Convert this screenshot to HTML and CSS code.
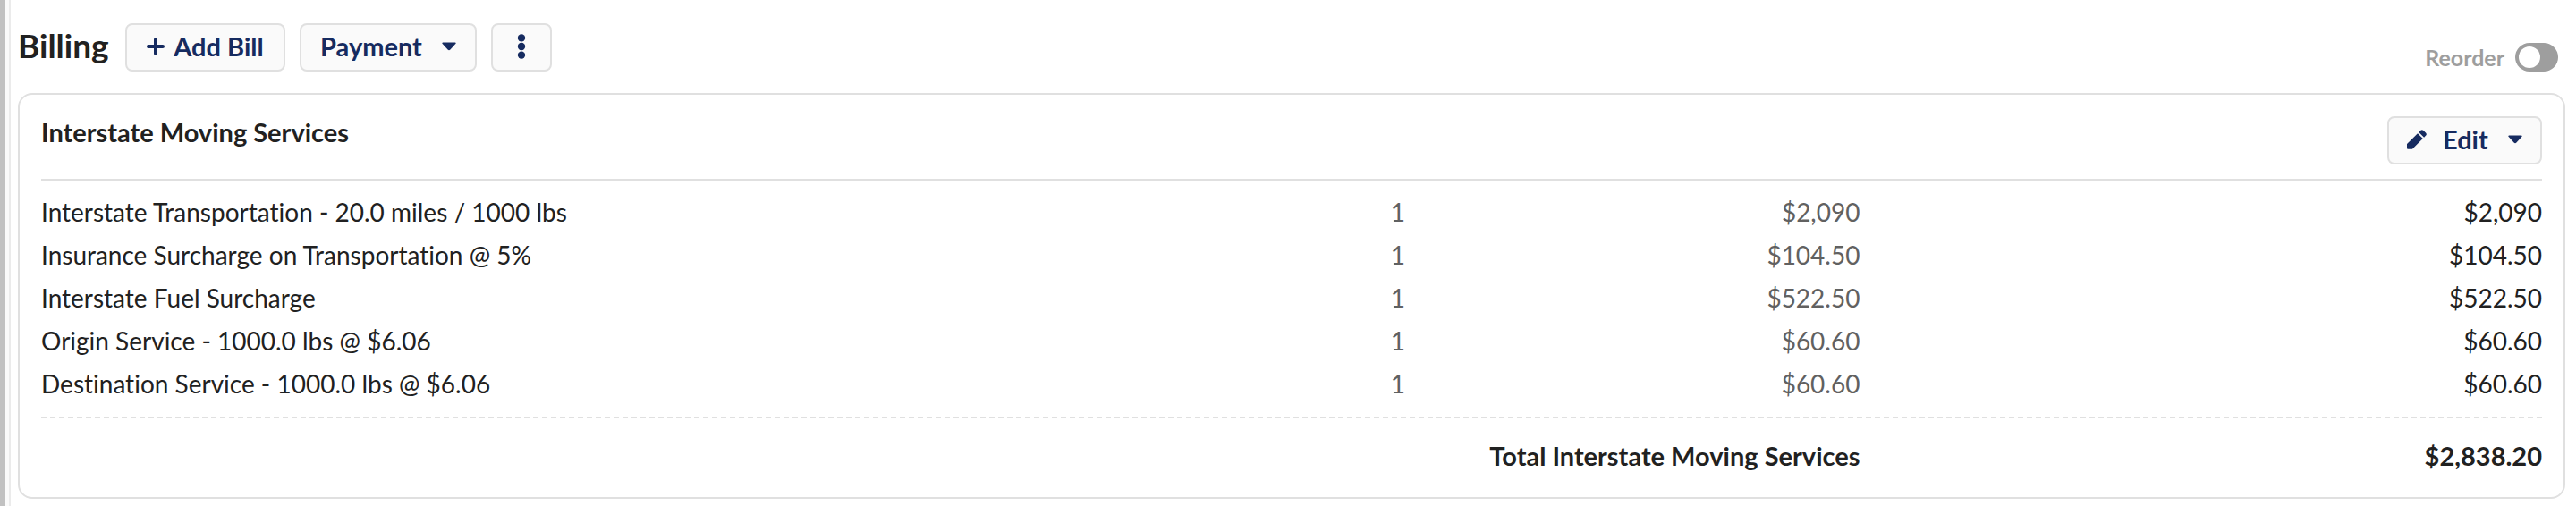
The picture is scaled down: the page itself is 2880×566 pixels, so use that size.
FILE: index.html
```html
<!DOCTYPE html>
<html lang="en">
<head>
<meta charset="utf-8">
<meta name="viewport" content="width=device-width, initial-scale=1">
<title>Billing</title>
<link rel="stylesheet" href="styles.css">
</head>
<body>
<div class="shell">
  <div class="scroll-edge"></div>
  <main class="billing">
    <header class="toolbar">
      <h1 class="page-title">Billing</h1>
      <button class="btn btn-add" type="button">
        <svg class="icon-plus" viewBox="0 0 20 20" aria-hidden="true"><path d="M10 2v16M2 10h16"/></svg>
        <span>Add Bill</span>
      </button>
      <button class="btn btn-payment" type="button">
        <span>Payment</span>
        <svg class="icon-caret" viewBox="0 0 16 10" aria-hidden="true"><path d="M1.200.5h13.600q1.600 0 .5 1.400L9.400 8.600q-1.400 1.400-2.800 0L.7 1.900Q-.4.5 1.200.5z"/></svg>
      </button>
      <button class="btn btn-more" type="button" aria-label="More actions">
        <svg class="icon-dots" viewBox="0 0 10 28" aria-hidden="true"><circle cx="5" cy="4.400" r="4.200"/><circle cx="5" cy="14" r="4.200"/><circle cx="5" cy="23.600" r="4.200"/></svg>
      </button>
      <label class="reorder">
        <span>Reorder</span>
        <input class="switch" type="checkbox" role="switch">
      </label>
    </header>
    <section class="card">
      <div class="card-head">
        <h2 class="card-title">Interstate Moving Services</h2>
        <button class="btn btn-edit" type="button">
          <svg class="icon-pencil" viewBox="0 0 22 22" aria-hidden="true"><path d="M0 16 12 4.200l5.800 5.800L6 21.800H1q-1 0-1-1zM13.300 2.900 15.400.8q1.400-1.200 2.800 0l3 3q1.200 1.400 0 2.800l-2.100 2.100z"/></svg>
          <span>Edit</span>
          <svg class="icon-caret" viewBox="0 0 16 10" aria-hidden="true"><path d="M1.200.5h13.600q1.600 0 .5 1.400L9.400 8.600q-1.400 1.400-2.800 0L.7 1.900Q-.4.5 1.200.5z"/></svg>
        </button>
      </div>
      <table class="charges">
        <tbody>
          <tr><td>Interstate Transportation - 20.0 miles / 1000 lbs</td><td class="muted">1</td><td class="muted">$2,090</td><td class="amount">$2,090</td></tr>
          <tr><td>Insurance Surcharge on Transportation @ 5%</td><td class="muted">1</td><td class="muted">$104.50</td><td class="amount">$104.50</td></tr>
          <tr><td>Interstate Fuel Surcharge</td><td class="muted">1</td><td class="muted">$522.50</td><td class="amount">$522.50</td></tr>
          <tr><td>Origin Service - 1000.0 lbs @ $6.06</td><td class="muted">1</td><td class="muted">$60.60</td><td class="amount">$60.60</td></tr>
          <tr><td>Destination Service - 1000.0 lbs @ $6.06</td><td class="muted">1</td><td class="muted">$60.60</td><td class="amount">$60.60</td></tr>
        </tbody>
        <tfoot>
          <tr><th class="total-label" colspan="3" scope="row">Total Interstate Moving Services</th><td class="amount">$2,838.20</td></tr>
        </tfoot>
      </table>
    </section>
  </main>
</div>
</body>
</html>
```

FILE: styles.css
```css
* {
  box-sizing: border-box;
}

body {
  margin: 0;
  background: #fff;
  color: #212121;
  font-family: Lato, "Liberation Sans", sans-serif;
  font-size: 28px;
  font-variant-ligatures: none;
  line-height: 48px;
}

.shell {
  display: flex;
  min-height: 100vh;
}

.scroll-edge {
  flex: none;
  width: 12px;
  background: #fafafa;
  border-left: 6px solid #c1c1c1;
  border-right: 2px solid #ebebeb;
}

.billing {
  flex: 1;
  min-width: 0;
  padding: 26px 12px 8px 8px;
}

.toolbar {
  display: flex;
  align-items: center;
  gap: 16px;
  margin-bottom: 24px;
}

.page-title {
  min-width: 104px;
  margin: 0;
  padding-bottom: 4px;
  font-size: 37px;
  font-weight: 700;
  line-height: 48px;
}

.btn {
  display: flex;
  align-items: center;
  justify-content: center;
  height: 54px;
  padding: 0 20px 2px;
  border: 2px solid #e0e0e0;
  border-radius: 8px;
  background: #fafafa;
  color: #162b60;
  font: inherit;
  font-size: 29px;
  font-weight: 700;
  cursor: pointer;
}

.btn svg {
  flex: none;
  fill: currentColor;
}

.btn-add {
  gap: 10px;
  min-width: 179px;
}

.btn-payment {
  gap: 22px;
  min-width: 198px;
}

.btn-more {
  width: 68px;
}

.btn-edit {
  justify-content: flex-start;
  gap: 18px;
  min-width: 173px;
}

.btn-edit .icon-caret {
  margin-left: auto;
}

.btn .icon-plus {
  width: 20px;
  height: 20px;
  fill: none;
  stroke: currentColor;
  stroke-width: 4;
  stroke-linecap: round;
}

.icon-caret {
  width: 16px;
  height: 10px;
}

.icon-dots {
  width: 10px;
  height: 28px;
}

.icon-pencil {
  width: 22px;
  height: 22px;
}

.reorder {
  display: flex;
  align-items: center;
  gap: 12px;
  margin-top: 22px;
  margin-left: auto;
  margin-right: 8px;
  color: #9e9e9e;
  font-size: 25px;
  font-weight: 700;
  line-height: 30px;
}

.switch {
  display: flex;
  align-items: center;
  appearance: none;
  width: 48px;
  height: 32px;
  margin: 0;
  padding: 0 4px;
  border-radius: 16px;
  background: #9e9e9e;
}

.switch::before {
  content: "";
  width: 24px;
  height: 24px;
  border-radius: 50%;
  background: #fff;
}

.switch:checked {
  justify-content: flex-end;
}

.card {
  padding: 24px 24px 22px;
  border: 2px solid #e0e0e0;
  border-radius: 16px;
}

.card-head {
  display: flex;
  align-items: flex-start;
  justify-content: space-between;
  padding-bottom: 16px;
  border-bottom: 2px solid #e0e0e0;
}

.card-title {
  margin: 0;
  font-size: 29px;
  font-weight: 700;
  line-height: 36px;
}

.charges,
.charges tbody,
.charges tfoot {
  display: block;
}

.charges tbody {
  padding: 11px 0 13px;
}

.charges tr {
  display: grid;
  grid-template-columns: 5fr 1fr 2fr 3fr;
}

.charges td,
.charges th {
  padding: 0;
}

.charges .muted {
  color: #616161;
  text-align: right;
}

.charges .amount {
  text-align: right;
}

.charges tfoot {
  padding-top: 18px;
  border-top: 2px dashed #e0e0e0;
  font-size: 29px;
  font-weight: 700;
}

.charges .total-label {
  grid-column: span 3;
  font-weight: 700;
  text-align: right;
}
```
